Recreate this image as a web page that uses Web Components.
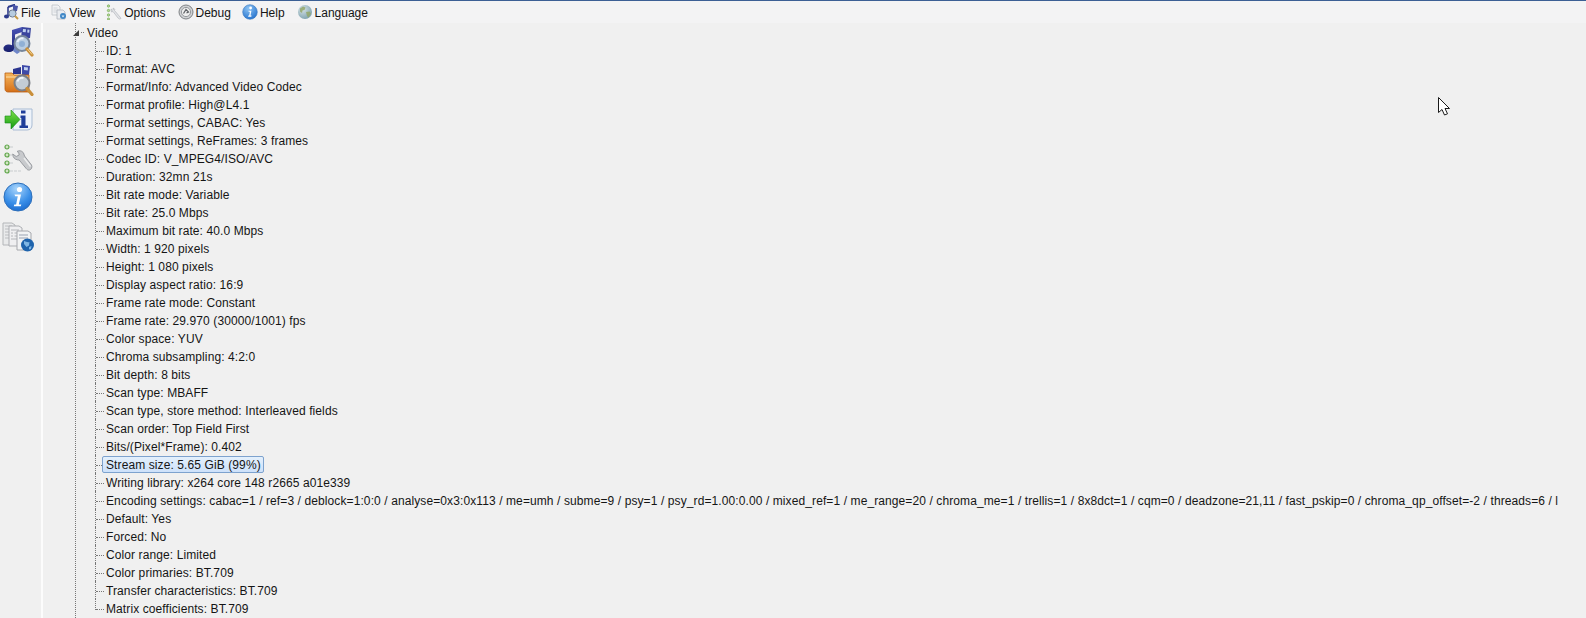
<!DOCTYPE html>
<html>
<head>
<meta charset="utf-8">
<title>MediaInfo</title>
<style>
  html, body { margin: 0; height: 100%; overflow: hidden; background: #f0f0f0; }
  body { font: 12px "Liberation Sans", Arial, sans-serif; color: #151515; }
</style>
</head>
<body>

<app-window>
  <menu-bar slot="menu">
    <menu-item label="File"><app-icon name="file"></app-icon></menu-item>
    <menu-item label="View"><app-icon name="view"></app-icon></menu-item>
    <menu-item label="Options"><app-icon name="options"></app-icon></menu-item>
    <menu-item label="Debug" style="margin-left:1px"><app-icon name="debug"></app-icon></menu-item>
    <menu-item label="Help"><app-icon name="help"></app-icon></menu-item>
    <menu-item label="Language" style="margin-left:1px"><app-icon name="language"></app-icon></menu-item>
  </menu-bar>

  <side-bar slot="side">
    <app-icon name="openfile" size="32"></app-icon>
    <app-icon name="openfolder" size="32"></app-icon>
    <app-icon name="export" size="32"></app-icon>
    <app-icon name="prefs" size="32"></app-icon>
    <app-icon name="about" size="32"></app-icon>
    <app-icon name="pages" size="32"></app-icon>
  </side-bar>

  <tree-view>
    <tree-node label="Video">
      <tree-leaf>ID: 1</tree-leaf>
      <tree-leaf>Format: AVC</tree-leaf>
      <tree-leaf>Format/Info: Advanced Video Codec</tree-leaf>
      <tree-leaf>Format profile: High@L4.1</tree-leaf>
      <tree-leaf>Format settings, CABAC: Yes</tree-leaf>
      <tree-leaf>Format settings, ReFrames: 3 frames</tree-leaf>
      <tree-leaf>Codec ID: V_MPEG4/ISO/AVC</tree-leaf>
      <tree-leaf>Duration: 32mn 21s</tree-leaf>
      <tree-leaf>Bit rate mode: Variable</tree-leaf>
      <tree-leaf>Bit rate: 25.0 Mbps</tree-leaf>
      <tree-leaf>Maximum bit rate: 40.0 Mbps</tree-leaf>
      <tree-leaf>Width: 1 920 pixels</tree-leaf>
      <tree-leaf>Height: 1 080 pixels</tree-leaf>
      <tree-leaf>Display aspect ratio: 16:9</tree-leaf>
      <tree-leaf>Frame rate mode: Constant</tree-leaf>
      <tree-leaf>Frame rate: 29.970 (30000/1001) fps</tree-leaf>
      <tree-leaf>Color space: YUV</tree-leaf>
      <tree-leaf>Chroma subsampling: 4:2:0</tree-leaf>
      <tree-leaf>Bit depth: 8 bits</tree-leaf>
      <tree-leaf>Scan type: MBAFF</tree-leaf>
      <tree-leaf>Scan type, store method: Interleaved fields</tree-leaf>
      <tree-leaf>Scan order: Top Field First</tree-leaf>
      <tree-leaf>Bits/(Pixel*Frame): 0.402</tree-leaf>
      <tree-leaf selected>Stream size: 5.65 GiB (99%)</tree-leaf>
      <tree-leaf>Writing library: x264 core 148 r2665 a01e339</tree-leaf>
      <tree-leaf>Encoding settings: cabac=1 / ref=3 / deblock=1:0:0 / analyse=0x3:0x113 / me=umh / subme=9 / psy=1 / psy_rd=1.00:0.00 / mixed_ref=1 / me_range=20 / chroma_me=1 / trellis=1 / 8x8dct=1 / cqm=0 / deadzone=21,11 / fast_pskip=0 / chroma_qp_offset=-2 / threads=6 / l</tree-leaf>
      <tree-leaf>Default: Yes</tree-leaf>
      <tree-leaf>Forced: No</tree-leaf>
      <tree-leaf>Color range: Limited</tree-leaf>
      <tree-leaf>Color primaries: BT.709</tree-leaf>
      <tree-leaf>Transfer characteristics: BT.709</tree-leaf>
      <tree-leaf>Matrix coefficients: BT.709</tree-leaf>
    </tree-node>
  </tree-view>

  <mouse-cursor slot="overlay"></mouse-cursor>
</app-window>

<script>
const ICONS = {
  // 16px menu icons
  file: `<svg viewBox="0 0 16 16"><path d="M5 3l6-2v8" fill="none" stroke="#2c3a8c" stroke-width="2"/><path d="M5 3v9" stroke="#2c3a8c" stroke-width="1.6"/><ellipse cx="3.5" cy="12.5" rx="2.5" ry="2" fill="#2c3a8c"/><path d="M10 1l5 1-1 5-4 1z" fill="#4a55a8"/><circle cx="9.5" cy="9.5" r="3.6" fill="#b7cce0" stroke="#6d7b92"/><path d="M12 12l3 3" stroke="#c89a45" stroke-width="2"/></svg>`,
  view: `<svg viewBox="0 0 16 16"><path d="M1 1h6l2 2v8H1z" fill="#f1f2f4" stroke="#bcc1c8" stroke-width=".8"/><path d="M2.500 4h4M2.500 6h5M2.500 8h5" stroke="#c8ccd2" stroke-width=".8"/><path d="M6 6h6l2 2v7H6z" fill="#e9ecf0" stroke="#aeb5bd" stroke-width=".8"/><circle cx="12" cy="12" r="3" fill="#3f87c6"/><path d="M10.600 11.600l1.400 1.800 1.400-1.800z" fill="#e6f2fb"/></svg>`,
  options: `<svg viewBox="0 0 16 16"><g fill="#b6d69a" stroke="#69a544" stroke-width=".6"><circle cx="2.500" cy="2" r="1.200"/><circle cx="2.500" cy="6.500" r="1.200"/><circle cx="2.500" cy="11" r="1.200"/><circle cx="2.500" cy="15" r="1.100"/></g><path d="M7 4l2 1.500-.5 1 5.500 6.500 1 1.500-1.500.5-1.500-1-5-6.500-1.500.5L5 5l1.500 1L7.500 5.500z" fill="#e2e4e7" stroke="#b4b8bd" stroke-width=".7"/></svg>`,
  debug: `<svg viewBox="0 0 16 16"><circle cx="8" cy="8" r="7" fill="#cfd1d4" stroke="#808386"/><circle cx="8" cy="8" r="4.600" fill="#eeeeee" stroke="#96999c"/><path d="M5.500 9.500L8 5.500l2.500 2.500-2 1" fill="none" stroke="#606367" stroke-width="1.300"/></svg>`,
  help: `<svg viewBox="0 0 16 16"><defs><radialGradient id="h" cx=".4" cy=".25" r=".85"><stop offset="0" stop-color="#8ec4f4"/><stop offset="1" stop-color="#1c6ccb"/></radialGradient></defs><circle cx="8" cy="8" r="7.300" fill="url(#h)" stroke="#3c78bd" stroke-width=".6"/><circle cx="8.600" cy="4" r="1.400" fill="#fff"/><path d="M6.400 6.700h3L8.500 11.600h1.100l-.3 1.100H6.100l.3-1.100h.8l.7-3.800H6.700z" fill="#fff"/></svg>`,
  language: `<svg viewBox="0 0 16 16"><defs><radialGradient id="g" cx=".35" cy=".3" r=".9"><stop offset="0" stop-color="#d5e2e6"/><stop offset="1" stop-color="#6d95a3"/></radialGradient></defs><circle cx="8" cy="8" r="7" fill="url(#g)"/><path d="M3 4.500l3-2 2.500 1-1 2.500-2 .5-.5 2.500-2-1.500zM9 8l3.500-.5 1.500 2-2.500 4-1.500-1.500z" fill="#93a76a" opacity=".85"/></svg>`,

  // 32px toolbar icons
  openfile: `<svg viewBox="0 0 32 32"><defs><linearGradient id="n" x1="0" y1="0" x2="0" y2="1"><stop offset="0" stop-color="#4a55b8"/><stop offset="1" stop-color="#181f6e"/></linearGradient></defs><path d="M10 5l10-3v5L13 9.500V22c0 3-3 5-6 5s-5.500-1-5.500-3.500S4 19.500 7 19.500c1.200 0 2.200.2 3 .7z" fill="url(#n)"/><path d="M20 2l9 1-1 10-9 2z" fill="#3a459e"/><path d="M21 4l3 .3-.3 3-3-.3zM25.500 4.500l2 .2-.3 3-2-.2z" fill="#bfd0ee"/><path d="M13 21l5 6-3 2-4-3z" fill="#6f86c9"/><circle cx="20" cy="18.500" r="7.500" fill="#b9cde2" stroke="#77879c" stroke-width="2"/><path d="M15.500 17a5 5 0 0 1 6-3.500" fill="none" stroke="#eaf2fa" stroke-width="2"/><circle cx="20" cy="19" r="3" fill="#7fa4d0" opacity=".7"/><path d="M25 24l5 6" stroke="#c98f3a" stroke-width="3.200" stroke-linecap="round"/><path d="M25.500 24l4.500 5.500" stroke="#f4d590"/></svg>`,
  openfolder: `<svg viewBox="0 0 32 32"><defs><linearGradient id="f" x1="0" y1="0" x2="0" y2="1"><stop offset="0" stop-color="#f6b65c"/><stop offset="1" stop-color="#d56f17"/></linearGradient></defs><path d="M11 5l8-2v7h-8z" fill="#2c368f"/><path d="M20 1l8 1-1 9h-7z" fill="#3d49a8"/><path d="M22 3l4 .4-.3 3-3.700-.3z" fill="#c3d2ee"/><path d="M3 9h7l2 2h15v17H6c-1.500 0-3-1-3-3z" fill="url(#f)" stroke="#b95e12" stroke-width=".8"/><path d="M4 13h22" stroke="#fbd79c" stroke-width="1.200"/><circle cx="20" cy="19" r="7.500" fill="#c3cdd6" stroke="#7b7f86" stroke-width="2"/><path d="M15.500 17.500a5 5 0 0 1 6-3.500" fill="none" stroke="#f1f5f9" stroke-width="2"/><path d="M25 24.500l5 6" stroke="#c98f3a" stroke-width="3.200" stroke-linecap="round"/></svg>`,
  export: `<svg viewBox="0 0 32 32"><defs><linearGradient id="a" x1="0" y1="0" x2="0" y2="1"><stop offset="0" stop-color="#7ee04a"/><stop offset="1" stop-color="#119a12"/></linearGradient></defs><path d="M11 6h19v16c0 3-2 5-5 5H11z" fill="#eef3fa" stroke="#a9bcd4"/><path d="M19 7.500h4.500v3H19z" fill="#1d3d9a"/><path d="M18.500 12.500h5v10H26V25h-8.500v-2.500h1.800V15h-.8z" fill="#1d3d9a"/><path d="M3 13h6V7l9 9.500L9 26v-6H3z" fill="url(#a)" stroke="#128a14" stroke-width=".6"/></svg>`,
  prefs: `<svg viewBox="0 0 32 32"><g fill="#d3e5c4" stroke="#5fa64a" stroke-width="1.200"><circle cx="5" cy="5" r="2"/><circle cx="5" cy="13" r="2"/><circle cx="5" cy="21" r="2"/><circle cx="5" cy="29" r="2"/></g><path d="M8 5h4M8 13h2M8 21h4M8 29h12" stroke="#d5d7d9" stroke-width="1.400" stroke-dasharray="3 1"/><path d="M15 9.500c3-1.500 5-.5 6.500 1.500l1 3 7 9c1 2 0 4.500-2 5-1.500.3-2.500-.5-3.300-1.500l-7-8.500c-2.700 0-5-1-6-3.500l-.5-2.500 3.500 2.500 3-1.500-.5-2.500z" fill="#c8cacd" stroke="#999ca1"/><path d="M22 16l6.500 8.500" stroke="#ecedee" stroke-width="1.500"/></svg>`,
  about: `<svg viewBox="0 0 32 32"><defs><radialGradient id="i" cx=".45" cy=".2" r=".95"><stop offset="0" stop-color="#a7d4fb"/><stop offset=".55" stop-color="#3a8fe8"/><stop offset="1" stop-color="#0f5cc4"/></radialGradient></defs><circle cx="16" cy="16" r="14" fill="url(#i)" stroke="#2e6fb9"/><circle cx="17.500" cy="8.500" r="2.600" fill="#fff"/><path d="M12.500 13.500H19l-2.200 10h2.500l-.5 1.800h-7l.5-1.800h1.800l1.700-8.200h-2.700z" fill="#fff"/></svg>`,
  pages: `<svg viewBox="0 0 32 32"><path d="M1 3h9l3 2v20H1z" fill="#e9eaeb" stroke="#b4b6b9"/><path d="M3 6h7M3 9h8M3 12h8M3 15h8M3 18h8" stroke="#bcbec1"/><path d="M7 6h10l3 2v18H7z" fill="#efeff1" stroke="#adafb3"/><path d="M9 10h8M9 13h2M12.500 13h5M9 16h2M12.500 16h5M9 19h8" stroke="#b4b6ba"/><path d="M15 11h11l3 2v17H15z" fill="#f2f3f4" stroke="#a6a8ad"/><path d="M17 15h9M17 18h9" stroke="#9aa3b3"/><circle cx="25.500" cy="25" r="6.500" fill="#1f64ad"/><path d="M22 21c2 1 4 1.500 5.500 1l-.5 3.500-2.500 1.500-2.500-3zM27 27l2.500-1-.5 3-2 .5z" fill="#7fb6e4"/></svg>`
};

class AppIcon extends HTMLElement {
  connectedCallback() {
    const size = this.getAttribute('size') || 16;
    const root = this.attachShadow({ mode: 'open' });
    root.innerHTML = `
      <style>
        :host { display: block; width: ${size}px; height: ${size}px; flex: none; }
        svg { display: block; width: 100%; height: 100%; }
      </style>
      ${ICONS[this.getAttribute('name')] || ''}`;
  }
}

class AppWindow extends HTMLElement {
  constructor() {
    super();
    this.attachShadow({ mode: 'open' }).innerHTML = `
      <style>
        :host { display: grid; grid-template-columns: 41px 1fr; grid-template-rows: 23px 1fr;
                height: 618px; width: 1586px; position: relative; overflow: hidden; }
        .menu { grid-column: 1 / 3; }
        .main { background: #f0f0f0; border-left: 2px solid #fcfcfc; overflow: hidden; min-width: 0; }
      </style>
      <div class="menu"><slot name="menu"></slot></div>
      <div><slot name="side"></slot></div>
      <div class="main"><slot></slot></div>
      <slot name="overlay"></slot>`;
  }
}

class MenuBar extends HTMLElement {
  constructor() {
    super();
    this.attachShadow({ mode: 'open' }).innerHTML = `
      <style>
        :host { display: flex; gap: 11px; height: 22px; padding-left: 3px; align-items: center;
                border-top: 1px solid #3b5f94; background: #f3f3f4; }
      </style>
      <slot></slot>`;
  }
}

class MenuItem extends HTMLElement {
  constructor() {
    super();
    this.attachShadow({ mode: 'open' }).innerHTML = `
      <style>
        :host { display: flex; align-items: center; gap: 2px; }
        span { line-height: 16px; padding-top: 1px; }
      </style>
      <slot></slot><span></span>`;
  }
  connectedCallback() {
    this.shadowRoot.querySelector('span').textContent = this.getAttribute('label');
  }
}

class SideBar extends HTMLElement {
  constructor() {
    super();
    this.attachShadow({ mode: 'open' }).innerHTML = `
      <style>
        :host { display: flex; flex-direction: column; gap: 7px; padding: 2px 0 0 2px; }
      </style>
      <slot></slot>`;
  }
}

class TreeView extends HTMLElement {
  constructor() {
    super();
    this.attachShadow({ mode: 'open' }).innerHTML = `
      <style>
        :host { display: block; height: 100%; margin-left: 32px; border-left: 1px dotted #777;
                letter-spacing: .1px; }
      </style>
      <slot></slot>`;
  }
}

class TreeNode extends HTMLElement {
  constructor() {
    super();
    this.attachShadow({ mode: 'open' }).innerHTML = `
      <style>
        :host { display: block; }
        .head { display: flex; align-items: center; height: 18px; margin-left: -3px; }
        .arrow { width: 0; height: 0; margin-top: 1px; border-style: solid; border-width: 0 0 6px 6px;
                 border-color: transparent transparent #3c3c3c transparent; }
        .dots { width: 3px; margin: 0 3px 0 2px; border-top: 1px dotted #777; }
        .label { padding-top: 1px; }
        .kids { margin-left: 19px; }
      </style>
      <div class="head"><span class="arrow"></span><span class="dots"></span><span class="label"></span></div>
      <div class="kids"><slot></slot></div>`;
  }
  connectedCallback() {
    this.shadowRoot.querySelector('.label').textContent = this.getAttribute('label');
  }
}

class TreeLeaf extends HTMLElement {
  constructor() {
    super();
    this.attachShadow({ mode: 'open' }).innerHTML = `
      <style>
        :host { display: flex; height: 18px; align-items: stretch; white-space: nowrap; }
        .branch { flex: none; width: 9px; height: 100%; box-sizing: border-box;
                  border-left: 1px dotted #777; }
        :host(:last-child) .branch { height: 11px; }
        .branch::after { content: ""; display: block; height: 10px; border-bottom: 1px dotted #777; }
        .text { align-self: center; height: 17px; margin: 1px 0 0 -2px; padding: 1px 2px 0 3px; box-sizing: border-box;
                border: 1px solid transparent; border-radius: 2px; line-height: 15px; }
        :host([selected]) .text { border-color: #7da2ce; background: linear-gradient(#e4f0fc, #cde1fa); }
      </style>
      <span class="branch"></span><span class="text"><slot></slot></span>`;
  }
}

class MouseCursor extends HTMLElement {
  constructor() {
    super();
    this.attachShadow({ mode: 'open' }).innerHTML = `
      <style>
        :host { position: absolute; left: 1437px; top: 96px; width: 14px; height: 20px; }
        svg { display: block; }
      </style>
      <svg width="14" height="20" viewBox="0 0 14 20">
        <path d="M1.500 1.500v15l3.500-3 2.500 5.500 3-1.200-2.500-5.300h4.500z" fill="#fff" stroke="#1a1a1a"/>
      </svg>`;
  }
}

customElements.define('app-icon', AppIcon);
customElements.define('app-window', AppWindow);
customElements.define('menu-bar', MenuBar);
customElements.define('menu-item', MenuItem);
customElements.define('side-bar', SideBar);
customElements.define('tree-view', TreeView);
customElements.define('tree-node', TreeNode);
customElements.define('tree-leaf', TreeLeaf);
customElements.define('mouse-cursor', MouseCursor);
</script>
</body>
</html>
